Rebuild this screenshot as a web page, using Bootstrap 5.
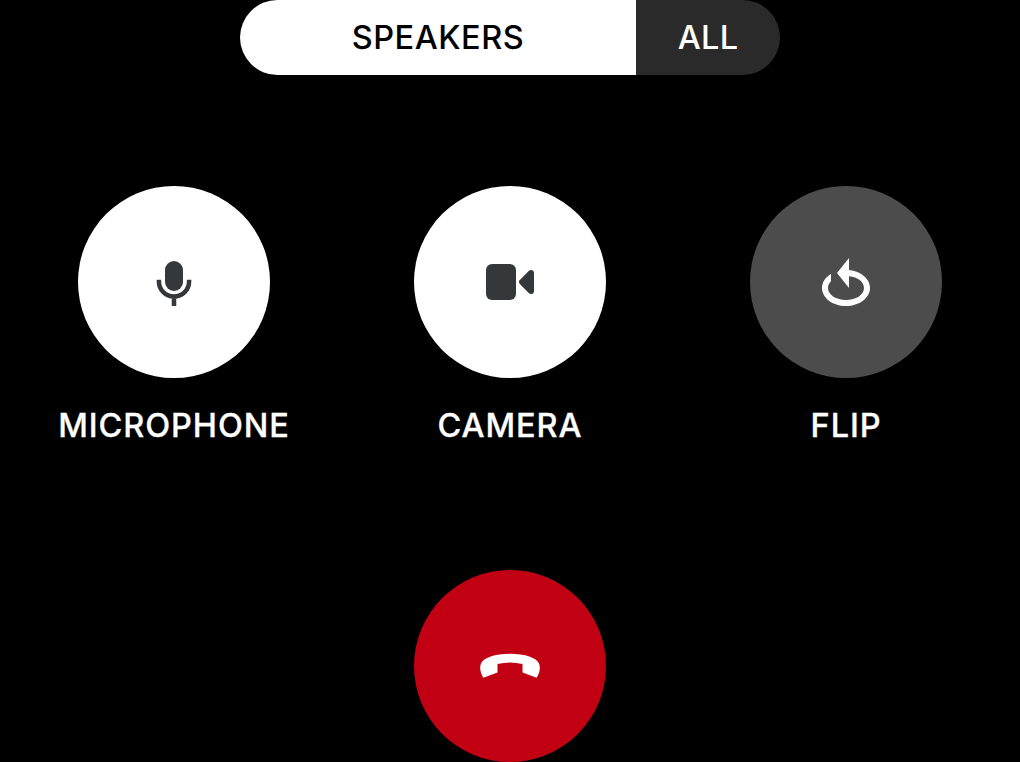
<!DOCTYPE html>
<html lang="en">
<head>
<meta charset="utf-8">
<meta name="viewport" content="width=device-width, initial-scale=1">
<title>Call controls</title>
<link href="https://cdn.jsdelivr.net/npm/bootstrap@5.3.0/dist/css/bootstrap.min.css" rel="stylesheet">
<style>
  body { background: #000; color: #fff; font-family: Inter, "Liberation Sans", sans-serif; font-size: 32.5px; font-weight: 500; line-height: 40px; overflow: hidden; }
  .view-switch { width: 540px; height: 75px; border-radius: 37.5px; }
  .view-switch .btn { font: inherit; border: 0; border-radius: 0; padding: 1px 0 0; }
  .view-speakers, .view-speakers:hover { width: 396px; background: #fff; color: #000; letter-spacing: .5px; }
  .view-all, .view-all:hover { background: #2a2a2a; color: #fff; letter-spacing: .3px; }
  .controls { width: 1008px; margin-top: 111px; }
  .control-label { margin-top: 28px; letter-spacing: .9px; -webkit-text-stroke: .3px #fff; }
  .round-btn, .round-btn:hover { width: 192px; height: 192px; background: #fff; color: #34383b; border: 0; padding: 0; }
  .round-muted, .round-muted:hover { background: #4c4c4c; color: #fff; }
  .round-end, .round-end:hover { background: #c20013; color: #fff; }
  .hangup { margin-top: 124px; padding-bottom: 2px !important; }
</style>
</head>
<body>
<main class="d-flex flex-column align-items-center">
  <div class="view-switch d-flex overflow-hidden">
    <button class="btn view-speakers">SPEAKERS</button>
    <button class="btn view-all flex-grow-1">ALL</button>
  </div>
  <div class="controls row g-0 text-center flex-shrink-0">
    <div class="col-4 d-flex flex-column align-items-center">
      <button class="btn round-btn rounded-circle d-flex align-items-center justify-content-center" aria-label="Microphone">
        <svg width="60" height="60" viewBox="0 0 60 60" fill="none"><rect x="21" y="9" width="18" height="30" rx="9" fill="currentColor"/><path d="M14.9 27.8V29.4a15.1 15.1 0 0 0 30.2 0V27.8M30 44v10" stroke="currentColor" stroke-width="4.5"/></svg>
      </button>
      <div class="control-label">MICROPHONE</div>
    </div>
    <div class="col-4 d-flex flex-column align-items-center">
      <button class="btn round-btn rounded-circle d-flex align-items-center justify-content-center" aria-label="Camera">
        <svg width="60" height="60" viewBox="0 0 60 60" fill="currentColor"><rect x="6" y="12" width="30" height="36" rx="6"/><path d="M39.6 28.3 48.7 18.9C50.7 17 54 18 54 20.8V39.2C54 42 50.7 43 48.7 41.1L39.6 31.7Q38.2 30 39.6 28.3Z"/></svg>
      </button>
      <div class="control-label">CAMERA</div>
    </div>
    <div class="col-4 d-flex flex-column align-items-center">
      <button class="btn round-btn round-muted rounded-circle d-flex align-items-center justify-content-center" aria-label="Flip">
        <svg width="60" height="60" viewBox="0 0 60 60" fill="currentColor"><path d="M33 6 21 21 33 36V24.2C41.8 25 48 29.8 48 36 48 43 39.8 48 30 48S12 43 12 36C12 33.2 13.2 31.1 15 29.2V22C9.500 25.200 6 30.200 6 36 6 46 16.700 54 30 54S54 46 54 36C54 26.700 44.900 19.200 33 18.100Z"/></svg>
      </button>
      <div class="control-label">FLIP</div>
    </div>
  </div>
  <button class="btn round-btn round-end hangup flex-shrink-0 rounded-circle d-flex align-items-center justify-content-center" aria-label="End call">
    <svg width="72" height="50" viewBox="0 0 72 50" fill="currentColor"><path d="M9.4 37.8C6.5 33.5 5.2 27.5 7 23.5 9.2 17.9 21 13.8 36 13.8S62.800 17.900 65 23.500C66.800 27.500 65.500 33.500 62.600 37.800L48.500 32.500V24.100Q36 20.900 23.500 24.100V32.500Z"/></svg>
  </button>
</main>
<script src="https://cdn.jsdelivr.net/npm/bootstrap@5.3.0/dist/js/bootstrap.bundle.min.js"></script>
</body>
</html>
